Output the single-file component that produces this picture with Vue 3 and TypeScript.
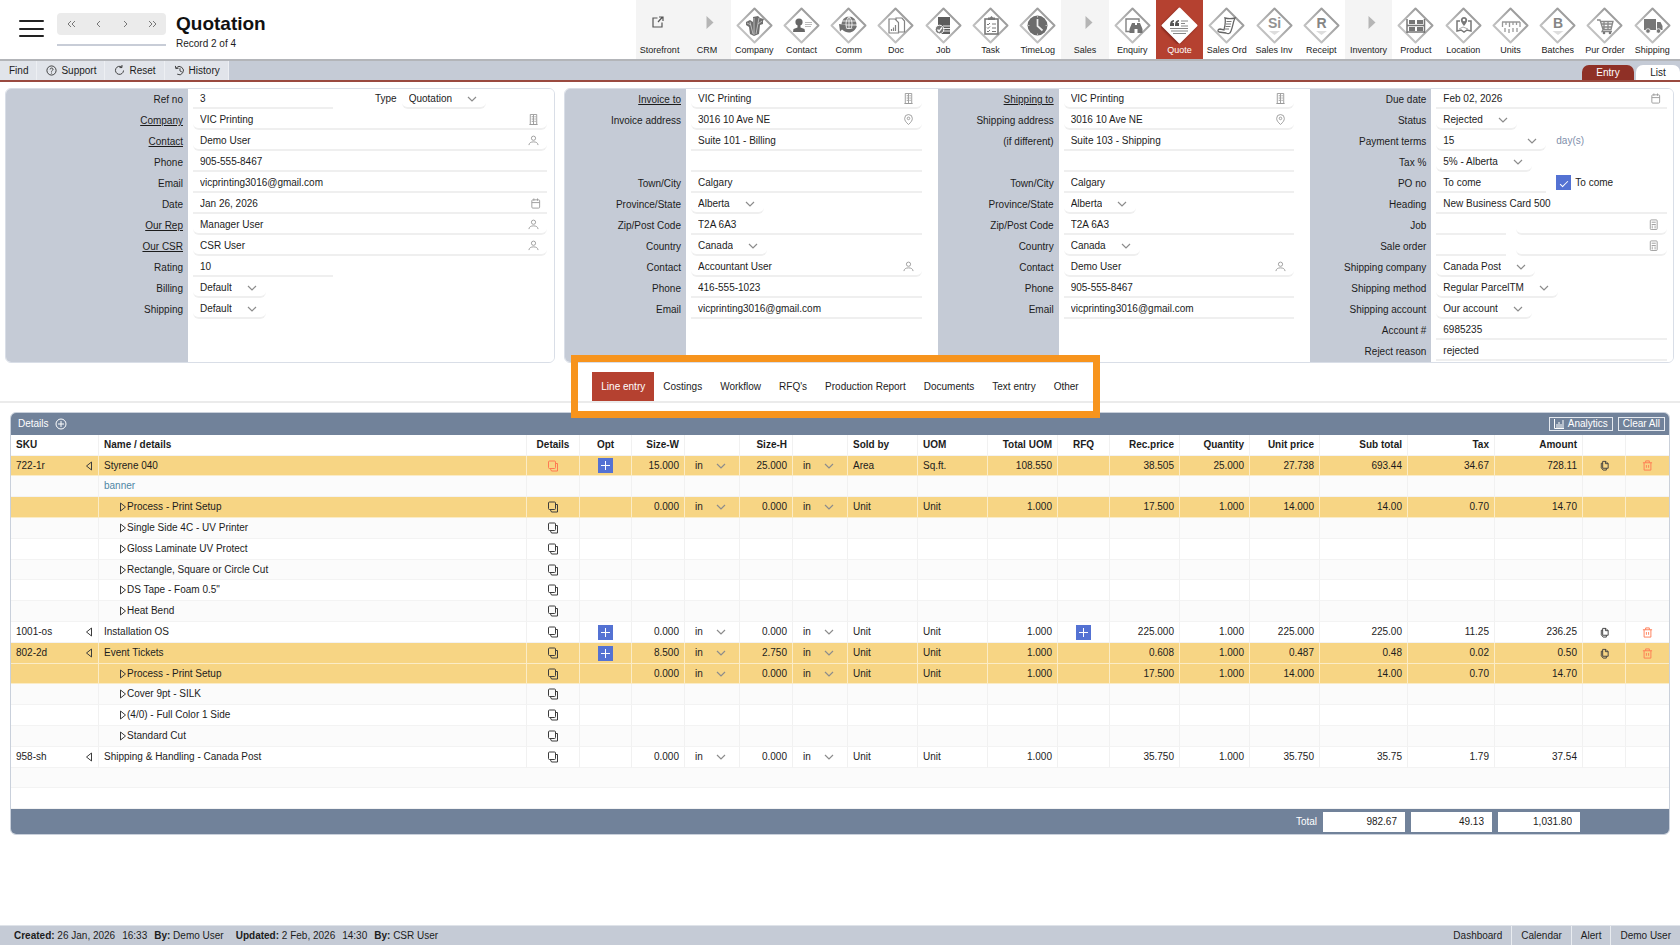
<script setup lang="ts">
import { ref } from 'vue'

interface Part {
  kind: 'input' | 'select' | 'note' | 'check' | 'caption'
  value?: string
  icon?: string
  size?: string
}
interface FieldRow {
  label: string
  link?: boolean
  parts: Part[]
}
interface Line {
  sku?: string
  name: string
  level: 'item' | 'note' | 'process'
  hot?: boolean
  redCopy?: boolean
  opt?: boolean
  rfq?: boolean
  tools?: boolean
  nums?: string[]
}

const text = (value = '', size = '', icon = ''): Part => ({ kind: 'input', value, size, icon })
const pick = (value: string, size = ''): Part => ({ kind: 'select', value, size })
const row = (label: string, ...parts: Part[]): FieldRow => ({ label, parts })
const linked = (label: string, ...parts: Part[]): FieldRow => ({ label, link: true, parts })

const general: FieldRow[] = [
  row('Ref no', text('3', 'ref'), { kind: 'caption', value: 'Type' }, pick('Quotation')),
  linked('Company', text('VIC Printing', '', 'building')),
  linked('Contact', text('Demo User', '', 'person')),
  row('Phone', text('905-555-8467')),
  row('Email', text('vicprinting3016@gmail.com')),
  row('Date', text('Jan 26, 2026', '', 'calendar')),
  linked('Our Rep', text('Manager User', '', 'person')),
  linked('Our CSR', text('CSR User', '', 'person')),
  row('Rating', text('10', 'ref')),
  row('Billing', pick('Default')),
  row('Shipping', pick('Default')),
]

const address = (first: string, second: string, third: string, suite: string, contact: string, phone: string): FieldRow[] => [
  linked(first, text('VIC Printing', '', 'building')),
  row(second, text('3016 10 Ave NE', '', 'pin')),
  row(third, text(suite)),
  row('', text('')),
  row('Town/City', text('Calgary')),
  row('Province/State', pick('Alberta')),
  row('Zip/Post Code', text('T2A 6A3')),
  row('Country', pick('Canada')),
  row('Contact', text(contact, '', 'person')),
  row('Phone', text(phone)),
  row('Email', text('vicprinting3016@gmail.com')),
]

const terms: FieldRow[] = [
  row('Due date', text('Feb 02, 2026', '', 'calendar')),
  row('Status', pick('Rejected')),
  row('Payment terms', pick('15', 'half'), { kind: 'note', value: 'day(s)' }),
  row('Tax %', pick('5% - Alberta')),
  row('PO no', text('To come', 'half'), { kind: 'check', value: 'To come' }),
  row('Heading', text('New Business Card 500')),
  row('Job', text('', 'short'), text('', '', 'calc')),
  row('Sale order', text('', 'short'), text('', '', 'calc')),
  row('Shipping company', pick('Canada Post')),
  row('Shipping method', pick('Regular ParcelTM')),
  row('Shipping account', pick('Our account')),
  row('Account #', text('6985235')),
  row('Reject reason', text('rejected')),
]

const panels = [
  { id: 'general', columns: [general] },
  {
    id: 'parties',
    columns: [
      address('Invoice to', 'Invoice address', '', 'Suite 101 - Billing', 'Accountant User', '416-555-1023'),
      address('Shipping to', 'Shipping address', '(if different)', 'Suite 103 - Shipping', 'Demo User', '905-555-8467'),
      terms,
    ],
  },
]

const small: Record<string, string> = {
  building: '<path d="M2.5 11.5v-11h7v11zM4 3h1.500M7 3h1.500M4 5.500h1.500M7 5.500h1.500M4 8h1.500M7 8h1.500M6 1v10M1.500 11.500h9"/>',
  person: '<circle cx="6" cy="3.500" r="2.300"/><path d="M1 11c.3-2.400 2-3.500 5-3.500s4.700 1.100 5 3.500"/>',
  calendar: '<rect x="2" y="2" width="8.500" height="9" rx="1"/><path d="M2 5h8.500M4.200.5v2.500M8.200.5v2.500"/>',
  pin: '<path d="M6 11.500C3 8.700 1.800 7 1.800 4.800a4.200 4.200 0 0 1 8.400 0C10.200 7 9 8.700 6 11.500z"/><circle cx="6" cy="4.800" r="1.400"/>',
  calc: '<rect x="2.500" y="1" width="7.500" height="10.500" rx="1"/><path d="M4 3.500h4.500M4 6h4.500M4 7.800h1.500M7 7.800h1.500M4 9.600h1.500M7 9.600h1.500"/>',
}

const g = '#828282'
const modules: { name: string; art?: string; plain?: 'link' | 'arrow' }[] = [
  { name: 'Storefront', plain: 'link' },
  { name: 'CRM', plain: 'arrow' },
  { name: 'Company', art: `<path fill="#6e6e6e" d="M10 15l4-2 3 2v-5l5-1 2 2 4 1-1 2v3l-3 1-1 9-5 2-4-2-1-7-3-2z"/><path stroke="#ddd" stroke-width=".7" fill="none" d="M14 15l3 12M18 11v17M23 11l-3 16M26 14l-4 3M11 16l4 2"/>` },
  { name: 'Contact', art: `<circle cx="16" cy="15" r="3.600" fill="#666"/><path fill="#666" d="M14.500 18h3v2.500l4 1.500.5 3H10l.5-3 4-1.500z"/><path stroke="#bbb" d="M22 15.500h7M22 17.500h7M22 19.500h6"/>` },
  { name: 'Comm', art: `<circle cx="19" cy="17" r="7.500" fill="#777"/><path stroke="#fff" stroke-width=".8" fill="none" d="M12 14h14M11 18h16M14 21.500h11M19 9.500v15M19 9.500c-4 4-4 11 0 15M19 9.500c4 4 4 11 0 15"/><path fill="#6f6f6f" d="M9 17l7 1-2 1.500c3 4 9 3 13-1-2 8-10 9-15 4l-2 2z"/>` },
  { name: 'Doc', art: `<path fill="#fff" stroke="${g}" stroke-width="1.200" d="M19 11h6l2.500 3v11H19z"/><path fill="#fff" stroke="${g}" stroke-width="1.200" d="M12 12h6l3.500 3.500V26H12z"/><path stroke="${g}" stroke-width="1.200" d="M14.500 24v-2M16.500 24v-3.500M18.500 24v-6"/>` },
  { name: 'Job', art: `<path fill="#5c5c5c" d="M13 10h12v17H13z"/><path stroke="#eee" stroke-width="1.200" d="M18 19h7M18 21.500h7M18 24h7"/><circle cx="14.500" cy="22.500" r="4.300" fill="#777" stroke="#fff"/><path fill="none" stroke="#fff" stroke-width="1.300" d="M12.500 22.500l1.500 2 3-4"/>` },
  { name: 'Task', art: `<rect x="13" y="12" width="13" height="15" fill="#fff" stroke="#777" stroke-width="1.600"/><path fill="#777" d="M16 13v-2.500h2l1.500-1.500 1.500 1.500h2V13z"/><path fill="none" stroke="#777" d="M15 17l1 1 2-2M15 20.500l1 1 2-2M15 24l1 1 2-2M20 17h4M20 21h4M20 24.500h4"/>` },
  { name: 'TimeLog', art: `<circle cx="18.500" cy="18.500" r="10" fill="#6c6c6c"/><path fill="none" stroke="#eee" stroke-width="1.700" d="M18.500 12v7l5 4.500"/><path stroke="#bbb" d="M18.500 9v1.500M28 18.500h-1.500M9 18.500h1.500M18.500 28v-1.500"/>` },
  { name: 'Sales', plain: 'arrow' },
  { name: 'Enquiry', art: `<path fill="none" stroke="${g}" stroke-width="1.400" d="M17 24.500h-5V12h13v3"/><path fill="#727272" d="M18 16h3v2h2v-2h3l2.500 6v4h-5v-4h-3v4h-5v-4z"/>` },
  { name: 'Quote', art: `<path fill="#555" d="M9 18c0-3 1-4.500 4-5v1.500c-1 .3-1.500 1-1.500 1.500H13v3H9zM14 18c0-3 1-4.500 4-5v1.500c-1 .3-1.500 1-1.500 1.500H18v3h-4z"/><path stroke="#888" stroke-width="1.100" d="M20 14h7M20 16.500h4M20 19h7M9 21.500h18M10 24h17M12 26.500h13"/>` },
  { name: 'Sales Ord', art: `<path fill="#fff" stroke="#666" stroke-width="1.300" d="M17 11c4 1 6 1 10 0-2 4-2 8-4 13-1 3-3 3-5 2l-7-1c-2-1-1-3 1-3l4 1c1-5 2-8 1-12z"/><path stroke="#777" d="M18.500 14.500h5M18 17h5M17.500 19.500h5M17 22h4"/>` },
  { name: 'Sales Inv', art: `<text x="18.500" y="21" text-anchor="middle" font-size="14" font-weight="700" fill="#929292">Si</text><path fill="#ddd" d="M13 24h11l-5.500 4z"/>` },
  { name: 'Receipt', art: `<text x="18.500" y="21" text-anchor="middle" font-size="14" font-weight="700" fill="#858585">R</text><path fill="#ddd" d="M13 24h11l-5.500 4z"/>` },
  { name: 'Inventory', plain: 'arrow' },
  { name: 'Product', art: `<path stroke="#777" stroke-width="1.500" d="M10 12v14M27.500 12v14M10 18.500h17.500M10 25h17.500"/><path fill="#777" d="M12 13h6v4h-6zM20 13h6v4h-6zM12 20h6v4h-6zM20 20h6v4h-6z"/>` },
  { name: 'Location', art: `<path fill="none" stroke="#777" stroke-width="1.500" d="M15 14h-3v10l4-1 3 2 3-2 4 1V14h-3"/><path fill="#777" d="M19 19c-3-4-3.500-5-3-7a3.200 3.200 0 0 1 6 0c.5 2 0 3-3 7z"/><circle cx="19" cy="13" r="1.300" fill="#fff"/><path stroke="#aaa" d="M14 22l4-2 5 2"/>` },
  { name: 'Units', art: `<path fill="none" stroke="#999" stroke-width="1.300" d="M10 15h18M10.500 15v5M14 15v3M17.500 15v5M21 15v3M24.500 15v3M28 15v5M13 21v4M17 22v4M21 21v4M25 21v4"/>` },
  { name: 'Batches', art: `<text x="19" y="21" text-anchor="middle" font-size="14" font-weight="700" fill="#858585">B</text><path fill="#ddd" d="M13.500 24h11L19 28z"/>` },
  { name: 'Pur Order', art: `<path fill="none" stroke="#888" stroke-width="1.300" d="M11 13h3l3 9.500h8l2-8H15M15.500 17h11M16 20h10M18 14v8M22 14v8M17 22.500l-1 2h10"/><circle cx="18" cy="26" r="1.300" fill="#777"/><circle cx="24" cy="26" r="1.300" fill="#777"/>` },
  { name: 'Shipping', art: `<path fill="#777" d="M10 12h12v11H10zM23 15h3.500l2 4v4H23z"/><circle cx="14" cy="24" r="2.300" fill="#777" stroke="#fff" stroke-width=".8"/><circle cx="24.500" cy="24" r="2.300" fill="#777" stroke="#fff" stroke-width=".8"/>` },
]

const pager = [
  { label: 'First record', d: 'M7 2L4 5l3 3M11 2L8 5l3 3' },
  { label: 'Previous record', d: 'M9 2L6 5l3 3' },
  { label: 'Next record', d: 'M6 2l3 3-3 3' },
  { label: 'Last record', d: 'M4 2l3 3-3 3M8 2l3 3-3 3' },
]

const commands = [
  { name: 'Find', art: '' },
  { name: 'Support', art: '<circle cx="6" cy="6" r="5"/><path d="M4.500 4.800C4.500 2.800 7.700 3 7.700 4.700 7.700 5.900 6 5.900 6 7.200M6 8.300v1"/>' },
  { name: 'Reset', art: '<path d="M8.500 2.200A4.400 4.400 0 1 0 10.400 6M8.700 0v2.800H6"/>' },
  { name: 'History', art: '<path d="M2.500 3A4.500 4.500 0 1 1 3.500 10M1.500 1l.5 3 3-.5M6.500 3.500v3l2 1"/>' },
]

const tabs = ['Line entry', 'Costings', 'Workflow', "RFQ's", 'Production Report', 'Documents', 'Text entry', 'Other']
const activeTab = ref('Line entry')

const columns = [
  { name: 'SKU', cls: 'c-sku' },
  { name: 'Name / details', cls: 'c-name' },
  { name: 'Details', cls: 'c-icon mid' },
  { name: 'Opt', cls: 'c-opt mid' },
  { name: 'Size-W', cls: 'c-icon num' },
  { name: '', cls: 'c-unit' },
  { name: 'Size-H', cls: 'c-icon num' },
  { name: '', cls: 'c-unit' },
  { name: 'Sold by', cls: 'c-mid' },
  { name: 'UOM', cls: 'c-mid' },
  { name: 'Total UOM', cls: 'c-mid num' },
  { name: 'RFQ', cls: 'c-opt mid' },
  { name: 'Rec.price', cls: 'c-mid num' },
  { name: 'Quantity', cls: 'c-mid num' },
  { name: 'Unit price', cls: 'c-mid num' },
  { name: 'Sub total', cls: 'c-wide num' },
  { name: 'Tax', cls: 'c-tax num' },
  { name: 'Amount', cls: 'c-wide num' },
  { name: '', cls: 'c-tool' },
  { name: '', cls: 'c-tool' },
]

// nums: width, height, sold by, UOM, total, rec. price, quantity, unit price, sub total, tax, amount
const setup = ['0.000', '0.000', 'Unit', 'Unit', '1.000', '17.500', '1.000', '14.000', '14.00', '0.70', '14.70']
const process = (name: string): Line => ({ name, level: 'process' })
const lines: Line[] = [
  { sku: '722-1r', name: 'Styrene 040', level: 'item', hot: true, redCopy: true, opt: true, tools: true, nums: ['15.000', '25.000', 'Area', 'Sq.ft.', '108.550', '38.505', '25.000', '27.738', '693.44', '34.67', '728.11'] },
  { name: 'banner', level: 'note' },
  { name: 'Process - Print Setup', level: 'process', hot: true, nums: setup },
  process('Single Side 4C - UV Printer'),
  process('Gloss Laminate UV Protect'),
  process('Rectangle, Square or Circle Cut'),
  process('DS Tape - Foam 0.5"'),
  process('Heat Bend'),
  { sku: '1001-os', name: 'Installation OS', level: 'item', opt: true, rfq: true, tools: true, nums: ['0.000', '0.000', 'Unit', 'Unit', '1.000', '225.000', '1.000', '225.000', '225.00', '11.25', '236.25'] },
  { sku: '802-2d', name: 'Event Tickets', level: 'item', hot: true, opt: true, tools: true, nums: ['8.500', '2.750', 'Unit', 'Unit', '1.000', '0.608', '1.000', '0.487', '0.48', '0.02', '0.50'] },
  { name: 'Process - Print Setup', level: 'process', hot: true, nums: setup },
  process('Cover 9pt - SILK'),
  process('(4/0) - Full Color 1 Side'),
  process('Standard Cut'),
  { sku: '958-sh', name: 'Shipping & Handling - Canada Post', level: 'item', nums: ['0.000', '0.000', 'Unit', 'Unit', '1.000', '35.750', '1.000', '35.750', '35.75', '1.79', '37.54'] },
]
const totals = [
  { name: 'Sub total', value: '982.67' },
  { name: 'Tax total', value: '49.13' },
  { name: 'Grand total', value: '1,031.80' },
]
const shortcuts = ['Dashboard', 'Calendar', 'Alert', 'Demo User']
</script>

<template>
  <div class="page">
    <header class="top">
      <button class="burger" aria-label="Menu"><i></i><i></i><i></i></button>
      <div class="pager-box">
        <div class="pager">
          <button v-for="p in pager" :key="p.label" :aria-label="p.label">
            <svg width="14" height="10" viewBox="0 0 14 10"><path :d="p.d" /></svg>
          </button>
        </div>
      </div>
      <div class="title">
        <h1>Quotation</h1>
        <p>Record 2 of 4</p>
      </div>
      <nav class="modules" aria-label="Modules">
        <button v-for="m in modules" :key="m.name" :class="{ plain: m.plain, on: m.name === 'Quote' }">
          <svg v-if="m.plain === 'link'" width="37" height="37" viewBox="0 0 37 37">
            <path d="M16.500 11h-4.500v9h9v-4.500M17 15l4.500-5M18 10h4v4" fill="none" stroke="#555" stroke-width="1.200" />
          </svg>
          <svg v-else-if="m.plain" width="37" height="37" viewBox="0 0 37 37">
            <path d="M18.500 9l7 6.500-7 6.500z" fill="#b5b5b5" />
          </svg>
          <svg v-else width="37" height="37" viewBox="0 0 37 37">
            <defs>
              <linearGradient :id="'edge-' + m.name.replace(' ', '')" x1="0" y1="1" x2="1" y2="0">
                <stop offset="0" stop-color="#d2d2d2" />
                <stop offset="1" stop-color="#8c8c8c" />
              </linearGradient>
            </defs>
            <path
              class="diamond"
              d="M18.500 1.500L35.500 18.500 18.500 35.500 1.500 18.500z"
              fill="#fff"
              :stroke="m.name === 'Quote' ? '#fff' : `url(#edge-${m.name.replace(' ', '')})`"
              stroke-width="2"
              stroke-linejoin="round"
            />
            <g v-html="m.art"></g>
          </svg>
          <span>{{ m.name }}</span>
        </button>
      </nav>
    </header>

    <div class="commands">
      <button v-for="c in commands" :key="c.name" class="command">
        <svg v-if="c.art" width="11" height="11" viewBox="0 0 12 12" v-html="c.art"></svg>
        {{ c.name }}
      </button>
      <div class="views">
        <button class="view on">Entry</button>
        <button class="view">List</button>
      </div>
    </div>

    <main>
      <div class="panels">
        <section v-for="p in panels" :key="p.id" class="panel" :class="p.id">
          <div v-for="(col, ci) in p.columns" :key="ci" class="column">
            <div v-for="(r, ri) in col" :key="ri" class="row">
              <label class="name" :class="{ link: r.link }" :for="`${p.id}-${ci}-${ri}-0`">{{ r.label }}</label>
              <div class="parts">
                <template v-for="(f, fi) in r.parts" :key="fi">
                  <div v-if="f.kind === 'input'" class="field" :class="[f.size, { lookup: f.icon && f.icon !== 'calendar' }]">
                    <input :id="`${p.id}-${ci}-${ri}-${fi}`" type="text" :value="f.value" :aria-label="r.label || 'Address line'" />
                    <button v-if="f.icon" :class="f.icon" :aria-label="`Choose ${r.label}`">
                      <svg width="11" height="11" viewBox="0 0 12 12" v-html="small[f.icon]"></svg>
                    </button>
                  </div>
                  <div v-else-if="f.kind === 'select'" class="drop" :class="f.size">
                    <select :id="`${p.id}-${ci}-${ri}-${fi}`" :aria-label="r.label">
                      <option>{{ f.value }}</option>
                    </select>
                    <svg class="caret" width="10" height="6" viewBox="0 0 10 6"><path d="M1 1l4 4 4-4" /></svg>
                  </div>
                  <label v-else-if="f.kind === 'caption'" class="caption" :for="`${p.id}-${ci}-${ri}-${fi + 1}`">{{ f.value }}</label>
                  <label v-else-if="f.kind === 'check'" class="check"><input type="checkbox" checked />{{ f.value }}</label>
                  <span v-else class="note">{{ f.value }}</span>
                </template>
              </div>
            </div>
          </div>
        </section>
      </div>

      <div class="tab-bar">
        <nav class="tabs" aria-label="Sections">
          <button v-for="t in tabs" :key="t" :class="{ on: t === activeTab }" @click="activeTab = t">{{ t }}</button>
          <div class="frame"></div>
        </nav>
      </div>

      <section class="details">
        <div class="details-head">
          <h2>Details</h2>
          <button class="add" aria-label="Add line">
            <svg width="12" height="12" viewBox="0 0 12 12"><circle cx="6" cy="6" r="5" /><path d="M6 3v6M3 6h6" /></svg>
          </button>
          <div class="head-tools">
            <button>
              <svg width="10" height="10" viewBox="0 0 10 10"><path d="M.500 0v9.500H10M3 9V5M5 9V3M7 9V5M9 9V1" /></svg>
              Analytics
            </button>
            <button>Clear All</button>
          </div>
        </div>
        <table>
          <thead>
            <tr>
              <th v-for="(c, i) in columns" :key="i" :class="c.cls" scope="col">{{ c.name }}</th>
            </tr>
          </thead>
          <tbody>
            <tr v-for="(l, i) in lines" :key="i" :class="{ hot: l.hot }">
              <td>
                <div v-if="l.sku" class="sku">
                  {{ l.sku }}
                  <button aria-label="Collapse line">
                    <svg width="8" height="10" viewBox="0 0 8 10"><path d="M6.500 1v8L1.500 5z" /></svg>
                  </button>
                </div>
              </td>
              <td>
                <span v-if="l.level === 'note'" class="memo">{{ l.name }}</span>
                <div v-else-if="l.level === 'process'" class="process">
                  <button aria-label="Expand process">
                    <svg width="8" height="10" viewBox="0 0 8 10"><path d="M1.500 1v8L6.500 5z" /></svg>
                  </button>
                  {{ l.name }}
                </div>
                <template v-else>{{ l.name }}</template>
              </td>
              <td class="mid">
                <button v-if="l.level !== 'note'" class="glyph" :class="{ red: l.redCopy }" aria-label="Line details">
                  <svg width="12" height="12" viewBox="0 0 12 12"><rect x="1.500" y="1" width="7" height="7.500" rx="1" /><path d="M10.500 3.500v7.500H4.500l-1-2M8.500 3.500h2" /></svg>
                </button>
              </td>
              <td class="mid"><button v-if="l.opt" class="plus" aria-label="Add option"><svg width="15" height="15" viewBox="0 0 15 15"><path d="M7.500 3v9M3 7.500h9" /></svg></button></td>
              <template v-for="s in 2" :key="s">
                <td class="num">{{ l.nums?.[s - 1] }}</td>
                <td>
                  <div v-if="l.nums" class="unit">
                    <select :aria-label="s === 1 ? 'Width unit' : 'Height unit'"><option>in</option></select>
                    <svg class="caret" width="10" height="6" viewBox="0 0 10 6"><path d="M1 1l4 4 4-4" /></svg>
                  </div>
                </td>
              </template>
              <td>{{ l.nums?.[2] }}</td>
              <td>{{ l.nums?.[3] }}</td>
              <td class="num">{{ l.nums?.[4] }}</td>
              <td class="mid"><button v-if="l.rfq" class="plus" aria-label="Add RFQ"><svg width="15" height="15" viewBox="0 0 15 15"><path d="M7.500 3v9M3 7.500h9" /></svg></button></td>
              <td v-for="n in 6" :key="n" class="num">{{ l.nums?.[n + 4] }}</td>
              <td class="mid">
                <button v-if="l.tools" class="glyph" aria-label="Duplicate line">
                  <svg width="11" height="11" viewBox="0 0 12 12"><path d="M4 1.500h3.500L10 4v5H4zM7 1.500V4h3M4 3.500H2.500v5l2 2.500H8V9" /></svg>
                </button>
              </td>
              <td class="mid">
                <button v-if="l.tools" class="glyph red" aria-label="Delete line">
                  <svg width="11" height="11" viewBox="0 0 12 12"><path d="M1 3h10M4 3V1h4v2M2.300 3v8h7.400V3M4.800 5.500v3M7.200 5.500v3" /></svg>
                </button>
              </td>
            </tr>
            <tr class="blank"><td colspan="20"></td></tr>
            <tr class="blank"><td colspan="20"></td></tr>
          </tbody>
          <tfoot>
            <tr>
              <th colspan="15" scope="row">Total</th>
              <td v-for="t in totals" :key="t.name"><input type="text" :value="t.value" :aria-label="t.name" readonly /></td>
              <td colspan="2"></td>
            </tr>
          </tfoot>
        </table>
      </section>
    </main>

    <footer class="status">
      <p><b>Created:</b> 26 Jan, 2026</p>
      <p>16:33</p>
      <p><b>By:</b> Demo User</p>
      <p class="next"><b>Updated:</b> 2 Feb, 2026</p>
      <p>14:30</p>
      <p><b>By:</b> CSR User</p>
      <nav>
        <a v-for="s in shortcuts" :key="s" href="#">{{ s }}</a>
      </nav>
    </footer>
  </div>
</template>

<style>
body {
  margin: 0;
  background: #fff;
}
</style>

<style scoped>
* {
  box-sizing: border-box;
}
.page {
  min-height: 100vh;
  display: flex;
  flex-direction: column;
  font: 10px/12px 'Liberation Sans', Arial, sans-serif;
  color: #1c1c1c;
}
button,
input,
select {
  font: inherit;
  color: inherit;
  border: 0;
  padding: 0;
  margin: 0;
  background: none;
  border-radius: 0;
  outline: 0;
}
svg {
  display: block;
  flex: none;
  fill: none;
}

/* Header */
.top {
  display: flex;
  height: 61px;
  border-bottom: 2px solid #b3b5b9;
  padding-right: 4px;
}
.burger {
  width: 25px;
  height: 17px;
  margin: 20px 13px 0 19px;
  display: flex;
  flex-direction: column;
  justify-content: space-between;
}
.burger i {
  height: 2px;
  width: 100%;
  background: #222;
  border-radius: 1px;
}
.pager-box {
  width: 109px;
  height: 46px;
  padding-top: 13px;
  border-bottom: 2px solid #c8cdd7;
}
.pager {
  height: 22px;
  background: #ebebeb;
  border-radius: 4px;
  display: flex;
}
.pager button {
  flex: 1;
  display: flex;
  align-items: center;
  justify-content: center;
}
.pager path {
  stroke: #777;
}
.title {
  margin: 13px 0 0 10px;
}
h1 {
  margin: 0;
  font-size: 19px;
  line-height: 22px;
  color: #111;
}
.title p {
  margin: 3px 0 0;
}
.modules {
  margin-left: auto;
  display: flex;
  flex: 0 0 1040px;
}
.modules button {
  flex: 1 1 0;
  min-width: 0;
  display: flex;
  flex-direction: column;
  align-items: center;
  padding-top: 7px;
  font-size: 9px;
  line-height: 13px;
  white-space: nowrap;
}
.modules button.plain {
  background: #f4f4f4;
}
.modules button.on {
  background: #b54130;
  color: #fff;
}
.modules .on .diamond {
  filter: drop-shadow(-1px 1px 1px #7c2118);
}

/* Command strip */
.commands {
  display: flex;
  height: 21px;
  background: #c5cbd6;
  border-bottom: 2px solid #9a4a40;
}
.command {
  display: flex;
  align-items: center;
  gap: 4px;
  padding: 0 8px 0 9px;
  background: #e1e4ea;
  border-right: 1px solid #edeff3;
}
.command svg {
  stroke: #333;
}
.views {
  margin-left: auto;
  display: flex;
  align-items: flex-end;
  gap: 2px;
}
.view {
  height: 15px;
  width: 44px;
  background: #fff;
  border-radius: 7px 7px 0 0;
}
.view.on {
  width: 52px;
  background: #8f3026;
  color: #fff;
}

/* Form panels */
.panels {
  display: grid;
  grid-template-columns: 550fr 1110fr;
  gap: 9px;
  padding: 6px 6px 0 5px;
}
.panel {
  display: grid;
  border: 1px solid #d9dee7;
  border-radius: 6px;
  overflow: hidden;
}
.panel.parties {
  grid-template-columns: minmax(0, 373fr) minmax(0, 373fr) minmax(0, 363fr);
}
.column {
  --label: 121px;
  background: linear-gradient(to right, #c5cbd6 var(--label), #fff var(--label));
  padding-right: 16px;
}
.general .column {
  --label: 182px;
  padding-right: 7px;
}
.column:nth-child(3) {
  padding-right: 6px;
}
.row {
  display: flex;
  height: 21px;
}
.row .name {
  width: var(--label);
  padding: 5px 5px 0 0;
  text-align: right;
}
.row .link {
  text-decoration: underline;
}
.parts {
  flex: 1;
  min-width: 0;
  display: flex;
  padding-left: 5px;
}
.field {
  flex: 1;
  min-width: 0;
  height: 20px;
  display: flex;
  align-items: center;
  border-bottom: 2px solid #efefef;
}
.field.lookup,
.drop {
  border-bottom: 2px solid #efefef;
  border-radius: 6px;
}
.field.ref {
  flex: 0 0 140px;
}
.field.half {
  flex: 0 0 110px;
}
.field.short {
  flex: 0 0 70px;
  margin-right: 10px;
}
.field input {
  flex: 1;
  min-width: 0;
  height: 18px;
  padding: 0 7px;
}
.field button {
  margin-right: 8px;
}
.field .calendar {
  margin-right: 6px;
}
.field svg {
  stroke: #999;
}
.drop {
  position: relative;
  height: 20px;
}
.drop.half {
  width: 110px;
}
select {
  appearance: none;
  height: 18px;
}
.drop select {
  field-sizing: content;
  padding: 1px 34px 0 7px;
}
.drop.half select {
  width: 100%;
}
.caret {
  position: absolute;
  right: 9px;
  top: 7px;
  stroke: #8c8c8c;
  stroke-width: 1.200;
  pointer-events: none;
}
.caption {
  padding-top: 4px;
  margin: 0 5px 0 42px;
}
.note {
  padding: 4px 0 0 10px;
  color: #7f8fab;
}
.check {
  display: flex;
  align-items: center;
  gap: 4px;
  height: 19px;
  margin-left: 10px;
}
.check input {
  appearance: none;
  width: 15px;
  height: 15px;
  background: #5472d3;
  display: grid;
  place-items: center;
}
.check input:checked::before {
  content: '';
  width: 7px;
  height: 3px;
  border: solid #fff;
  border-width: 0 0 1px 1px;
  transform: rotate(-45deg);
}

/* Section tabs */
.tab-bar {
  display: flex;
  justify-content: center;
  padding-top: 9px;
  border-bottom: 2px solid #ebebeb;
}
.tabs {
  position: relative;
  display: flex;
  height: 29px;
}
.tabs button {
  padding: 0 9px;
}
.tabs .on {
  background: #b54130;
  color: #fff;
}
.frame {
  position: absolute;
  inset: -17px -12px -17px -21px;
  border: 7px solid #f7941d;
  pointer-events: none;
}

/* Line details */
.details {
  margin: 9px 10px 0;
  border: 1px solid #c9d0db;
  border-radius: 6px;
  overflow: hidden;
}
.details-head {
  display: flex;
  align-items: center;
  height: 22px;
  padding: 0 4px 0 7px;
  background: #71829a;
  color: #fff;
}
h2 {
  margin: 0 6px 0 0;
  font-size: 10px;
  font-weight: 400;
}
.details-head svg {
  stroke: #fff;
}
.head-tools {
  display: flex;
  gap: 5px;
  margin-left: auto;
}
.head-tools button {
  display: flex;
  align-items: center;
  gap: 4px;
  height: 14px;
  padding: 0 4px;
  border: 1px solid #e5e9ef;
}
table {
  width: 100%;
  table-layout: fixed;
  border-collapse: separate;
  border-spacing: 0;
}
th,
td {
  padding: 0 5px;
  text-align: left;
  white-space: nowrap;
  border-right: 1px solid #f1f1f1;
  border-bottom: 1px solid #f3f3f3;
}
tr > :last-child {
  border-right: 0;
}
.c-sku,
.c-wide {
  width: 88px;
}
.c-tax {
  width: 87px;
}
.c-icon {
  width: 53px;
}
.c-opt {
  width: 52px;
}
.c-unit {
  width: 55px;
}
.c-mid {
  width: 70px;
}
.c-tool {
  width: 43px;
}
thead th {
  height: 21px;
}
tbody tr {
  height: 21px;
}
tbody tr:nth-child(5n + 1) {
  height: 20px;
}
tbody tr:nth-child(even) {
  background: #fbfbfb;
}
tbody tr.hot {
  background: #f7d584;
}
.hot td {
  border-color: #fbecc6;
}
.num {
  text-align: right;
}
.mid {
  text-align: center;
}
.mid button {
  display: block;
  margin: 0 auto;
}
.sku,
.process {
  display: flex;
  align-items: center;
}
.sku {
  justify-content: space-between;
}
.process {
  padding-left: 15px;
}
.sku svg,
.process svg,
.glyph svg {
  stroke: #3c3c3c;
}
.glyph.red svg {
  stroke: #ff7a52;
}
.memo {
  color: #4f86a5;
}
.plus {
  background: #5472d3;
}
.plus svg {
  stroke: #fff;
}
.unit {
  position: relative;
}
.unit select {
  width: 100%;
  padding-left: 5px;
}
.unit .caret {
  right: 8px;
  top: 6px;
}
tfoot th,
tfoot td {
  height: 25px;
  padding: 0 3px;
  background: #71829a;
  border: 0;
}
tfoot th {
  text-align: right;
  font-weight: 400;
  color: #fff;
}
tfoot input {
  display: block;
  width: 100%;
  height: 20px;
  padding-right: 8px;
  background: #fff;
  text-align: right;
}

/* Status strip */
.status {
  margin-top: auto;
  display: flex;
  align-items: stretch;
  height: 20px;
  padding-left: 14px;
  background: #c5cbd6;
  border-top: 1px solid #dfe3e9;
}
.status p {
  margin: 4px 7px 0 0;
}
.status p.next {
  margin-left: 5px;
}
.status nav {
  margin-left: auto;
  display: flex;
}
.status a {
  padding: 4px 9px 0;
  color: inherit;
  text-decoration: none;
  border-left: 1px solid #e9ecf0;
}
.status a:first-child {
  border-left: 0;
}
</style>
